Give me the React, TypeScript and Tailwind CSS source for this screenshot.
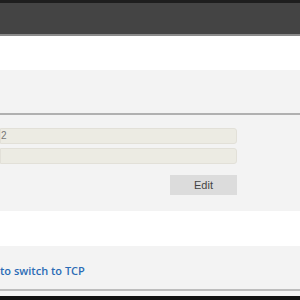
export default function App() {
  return (
    <div className="w-[300px] h-[300px] overflow-hidden bg-[#f3f3f3] flex flex-col" style={{ fontFamily: "Arial, 'Liberation Sans', sans-serif" }}>
      {/* top bar */}
      <div className="h-[3px] bg-[#1e1e1e]" />
      <div className="h-[31px] bg-[#444444]" />
      <div className="h-[2px] bg-[#8a8a8a]" />
      <div className="h-[34px] bg-white" />

      {/* settings panel */}
      <div className="h-[43px]" />
      <div className="h-[2px] bg-[#b0b0b0]" />
      <div className="flex flex-col gap-[4px] pt-[13px] w-[237px]">
        <div className="h-[16px] bg-[#ecebe3] border border-[#e2e0d8] rounded-r-[3px] text-[10px] leading-[14px] text-[#777]">
          2
        </div>
        <div className="h-[16px] bg-[#ecebe3] border border-[#e2e0d8] rounded-r-[3px]" />
      </div>
      <div className="flex justify-end w-[237px] pt-[11px]">
        <button className="w-[67px] h-[20px] bg-[#dcdcdc] text-[11px] text-[#444]">Edit</button>
      </div>

      <div className="h-[16px]" />
      <div className="h-[35px] bg-white" />

      <div className="pt-[18px] h-[43px] overflow-hidden">
        <span className="text-[11px] font-semibold text-[#2b6cb6] block leading-[13px]" style={{ fontFamily: "'Open Sans', sans-serif" }}>
          to switch to TCP
        </span>
      </div>
      <div className="h-[2px] bg-[#bdbdbd]" />
      <div className="h-[5px]" />
      <div className="flex-1 bg-[#111]" />
    </div>
  );
}
